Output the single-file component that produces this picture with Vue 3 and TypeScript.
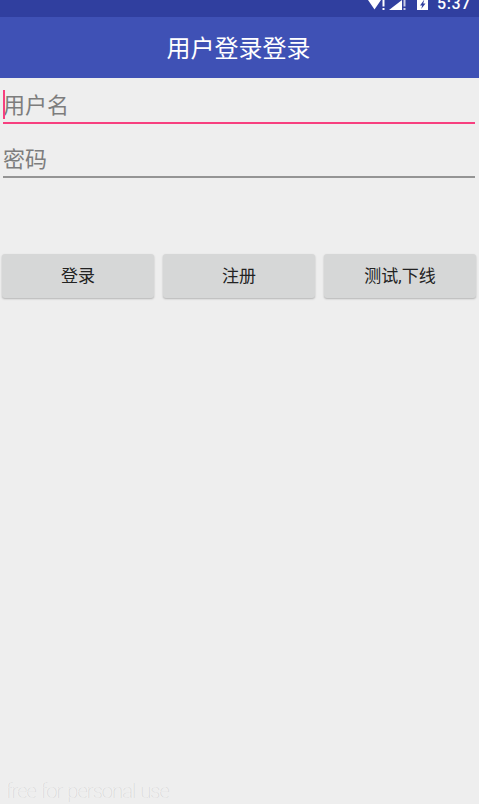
<script setup lang="ts">
import { ref } from 'vue'

const username = ref('')
const password = ref('')
const buttons = ['登录', '注册', '测试,下线']
</script>

<template>
  <div class="screen">
    <div class="status-bar">
      <svg class="ic-wifi" viewBox="0 0 17 10" width="17" height="10">
        <path d="M0 0 H13 L6.5 9.5 Z" fill="#fff" />
        <rect x="14.5" y="0" width="2" height="6.5" fill="#fff" />
        <rect x="14.5" y="8" width="2" height="2" fill="#fff" />
      </svg>
      <svg class="ic-signal" viewBox="0 0 17 10" width="17" height="10">
        <path d="M0 10 L13 0 V10 Z" fill="#fff" />
        <rect x="14.5" y="0" width="2" height="6.5" fill="#c9cde6" />
        <rect x="14.5" y="8" width="2" height="2" fill="#c9cde6" />
      </svg>
      <svg class="ic-battery" viewBox="0 0 11 10" width="11" height="10">
        <rect x="0" y="0" width="11" height="10" fill="#fff" />
        <path d="M7 0 L3 5.5 H5.2 L4.2 9 L8.5 3.5 H6.2 L7.2 0 Z" fill="#303f9f" />
      </svg>
      <span class="clock">5:37</span>
    </div>

    <header class="app-bar">用户登录登录</header>

    <main class="content">
      <div class="form">
        <div class="field focused">
          <span class="cursor"></span>
          <input v-model="username" placeholder="用户名" />
        </div>
        <div class="field">
          <input v-model="password" type="password" placeholder="密码" />
        </div>
      </div>

      <div class="actions">
        <button v-for="label in buttons" :key="label" class="btn">{{ label }}</button>
      </div>
    </main>

    <div class="watermark">free for personal use</div>
  </div>
</template>

<style>
html,
body {
  margin: 0;
  background: #eeeeee;
}
</style>

<style scoped>
.screen {
  position: relative;
  display: flex;
  flex-direction: column;
  width: 479px;
  height: 804px;
  overflow: hidden;
  background: #eeeeee;
  font-family: "Roboto", "Noto Sans CJK SC", sans-serif;
}

.status-bar {
  display: flex;
  align-items: flex-start;
  height: 17px;
  padding-left: 368px;
  overflow: hidden;
  background: #303f9f;
  color: #fff;
}

.ic-signal {
  margin-left: 4px;
}

.ic-battery {
  margin-left: 11px;
}

.clock {
  margin-left: 9px;
  margin-top: -6px;
  font-size: 16px;
  line-height: 20px;
  font-weight: 500;
  letter-spacing: 0.6px;
}

.app-bar {
  display: flex;
  align-items: center;
  justify-content: center;
  height: 61px;
  box-sizing: border-box;
  padding: 0 2px 3px 0;
  background: #3f51b5;
  color: #fff;
  font-size: 24px;
}

.form {
  display: flex;
  flex-direction: column;
  gap: 9px;
  padding: 0 4px 0 3px;
}

.field {
  position: relative;
  height: 43px;
  border-bottom: 2px solid #949494;
}

.field.focused {
  height: 44px;
  border-bottom-color: #f73f7f;
}

.field input {
  display: block;
  box-sizing: border-box;
  width: 100%;
  height: 100%;
  padding: 10px 0 0;
  border: none;
  outline: none;
  background: transparent;
  font-family: inherit;
  font-size: 22px;
  color: #333;
}

.field input::placeholder {
  color: #7d7d7d;
  opacity: 1;
}

.cursor {
  position: absolute;
  left: 0;
  top: 12px;
  width: 2px;
  height: 29px;
  background: #f73f7f;
}

.actions {
  display: grid;
  grid-template-columns: repeat(3, 152px);
  justify-content: space-between;
  margin-top: 76px;
  padding: 0 3px 0 2px;
}

.btn {
  height: 44px;
  padding: 0 0 3px;
  border: none;
  border-radius: 3px;
  background: #d6d7d7;
  box-shadow: 0 1px 2px rgba(0, 0, 0, 0.25);
  color: #222;
  font-family: inherit;
  font-size: 17px;
}

.watermark {
  position: absolute;
  left: 5px;
  bottom: 1px;
  color: #f3f3f3;
  font-size: 20px;
  font-weight: 100;
  letter-spacing: -0.8px;
  word-spacing: 1px;
  text-shadow: 1px 0 0 #d2d2d2;
  white-space: nowrap;
}
</style>
